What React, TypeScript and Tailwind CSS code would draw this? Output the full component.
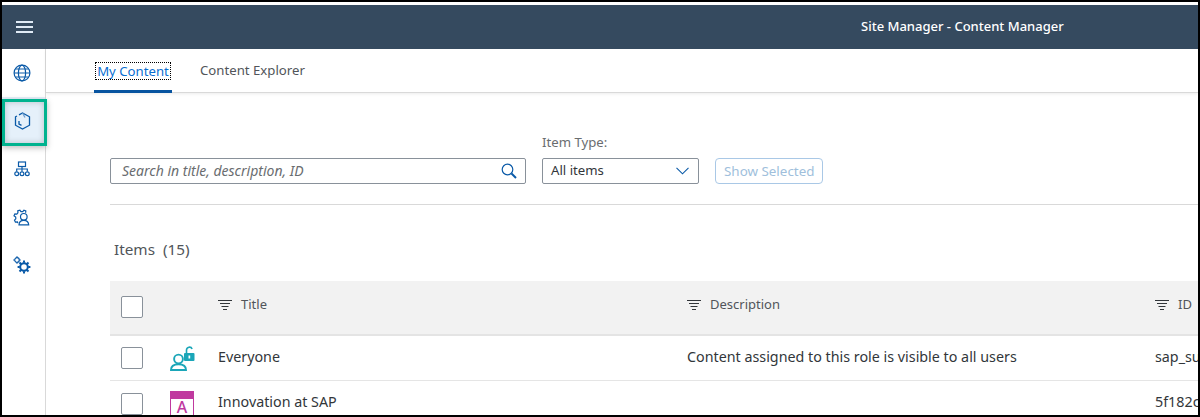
import React from "react";

const blue = "#0a5aa8";

function Globe() {
  return (
    <svg width="18" height="18" viewBox="0 0 18 18" fill="none" stroke={blue} strokeWidth="1.2">
      <circle cx="9" cy="9" r="7.9" />
      <ellipse cx="9" cy="9" rx="3.6" ry="7.9" />
      <path d="M1.100 9h15.800M2.400 5h13.200M2.400 13h13.200" />
    </svg>
  );
}
function Cube() {
  return (
    <svg width="17" height="18" viewBox="0 0 17 18" fill="none" stroke={blue} strokeWidth="1.3">
      <path d="M5 2.800 8.500 1l7 3.800v8.400l-7 3.800-7-3.800V4.800L3 4" />
      <path d="M5 9v3l2.500 1.400" />
      <path d="M8.500 1 11 5.500" stroke="#6f9ed0" />
    </svg>
  );
}
function Hierarchy() {
  return (
    <svg width="16" height="16" viewBox="0 0 16 16" fill="none" stroke={blue} strokeWidth="1.2">
      <rect x="4.500" y="1" width="7" height="4.500" />
      <path d="M8 5.500V8M2.700 10.500V8h10.600v2.500M8 8v2.500" />
      <circle cx="2.700" cy="12.800" r="1.900" />
      <circle cx="8" cy="12.800" r="1.900" />
      <circle cx="13.300" cy="12.800" r="1.900" />
    </svg>
  );
}
function GearUser() {
  return (
    <svg width="18" height="18" viewBox="0 0 18 18" fill="none" stroke={blue} strokeWidth="1.2">
      <path d="M4.800 15.200 4.400 13.800l-2 .2-.9-1.900 1.300-1.300-.1-1.800L1 7.800l.9-2 1.900.3 1.100-1.300-.1-2 2.100-.6 1 1.400 1.900 0L10.900 2.200l1.900.8-.2 1.700" />
      <circle cx="10.800" cy="8.800" r="3.300" />
      <path d="M6 16.800c.1-2.900 2.100-4.500 4.800-4.500s4.700 1.600 4.900 4.500z" />
    </svg>
  );
}
function Gears() {
  return (
    <svg width="18" height="18" viewBox="0 0 18 18" fill="none" stroke={blue}>
      <circle cx="4" cy="4" r="2.300" strokeWidth="1.200" />
      <path d="M4 .2v1.300M4 6.500v1.300M.2 4h1.300M6.500 4h1.300" strokeWidth="1.200" />
      <circle cx="11" cy="11" r="3.800" strokeWidth="2" />
      <path d="M11 4.600v2.200M11 15.200v2.200M4.600 11h2.200M15.200 11h2.200M6.500 6.500l1.500 1.500M14 14l1.500 1.500M6.500 15.500 8 14M14 8l1.500-1.500" strokeWidth="2" />
    </svg>
  );
}
function SearchIcon() {
  return (
    <svg width="16" height="16" viewBox="0 0 16 16" fill="none" stroke={blue}>
      <circle cx="6.500" cy="6.500" r="5.300" strokeWidth="1.200" />
      <path d="m10.500 10.500 4.500 4.500" strokeWidth="2" />
    </svg>
  );
}
function Chevron() {
  return (
    <svg width="13" height="8" viewBox="0 0 13 8" fill="none" stroke={blue} strokeWidth="1.100">
      <path d="m.5.800 6 6 6-6" />
    </svg>
  );
}
function SortLines() {
  return (
    <svg width="14" height="10" viewBox="0 0 14 10" fill="none" stroke="#32363a" strokeWidth="1">
      <path d="M0 .5h14M2 3.500h10M3.500 6.500h7M5 9.500h4" />
    </svg>
  );
}
function RoleIcon() {
  return (
    <svg width="25" height="25" viewBox="0 0 25 25" fill="none">
      <circle cx="8.500" cy="13" r="4.400" stroke="#1ba6b8" strokeWidth="1.900" />
      <path d="M1 24c0-4.200 3.200-5.800 7.500-5.800S16 19.800 16 24z" stroke="#1ba6b8" strokeWidth="1.900" />
      <rect x="14" y="7" width="10.500" height="8" rx="1" fill="#1ba6b8" />
      <path d="M16.500 7V4a2.900 2.900 0 0 1 5.600-1" stroke="#1ba6b8" strokeWidth="1.600" />
      <rect x="18.500" y="9.500" width="1.700" height="3" fill="#fff" />
    </svg>
  );
}
function AppIcon() {
  return (
    <div className="flex h-[25px] w-[24px] shrink-0 flex-col border border-[#c0399f]">
      <div className="h-[7px] shrink-0 bg-[#c0399f]" />
      <div className="flex flex-1 items-center justify-center text-[16px] leading-none font-medium text-[#c0399f]">A</div>
    </div>
  );
}
function Check() {
  return <div className="h-[22px] w-[22px] shrink-0 rounded-[2px] border border-[#89919a] bg-white" />;
}

function SideItem({ children, active }: { children: React.ReactNode; active?: boolean }) {
  return (
    <div className={`flex h-[48px] w-full items-center justify-center pr-[3px] ${active ? "bg-[#e5f0fa]" : ""}`}>{children}</div>
  );
}

function Row({ icon, title, desc, id, last }: { icon: React.ReactNode; title: string; desc: string; id: string; last?: boolean }) {
  return (
    <div className={`flex h-[45px] shrink-0 items-center text-[14.3px] text-[#32363a] ${last ? "" : "border-b border-[#e5e5e5]"}`}>
      <div className="flex w-[60px] shrink-0 pl-[11px]"><Check /></div>
      <div className="flex w-[48px] shrink-0 items-center">{icon}</div>
      <div className="w-[469px] shrink-0 pb-[3px]">{title}</div>
      <div className="w-[468px] shrink-0 pb-[3px] whitespace-nowrap">{desc}</div>
      <div className="shrink-0 pb-[3px] whitespace-nowrap">{id}</div>
    </div>
  );
}

function HeadCell({ label, w }: { label: string; w?: string }) {
  return (
    <div className={`flex shrink-0 items-center gap-[9px] pb-[6px] text-[13px] text-[#51555a] ${w ?? ""}`}>
      <SortLines />
      {label}
    </div>
  );
}

export default function App() {
  return (
    <div className="relative flex h-[417px] w-[1200px] flex-col overflow-hidden border-2 border-black bg-white text-[14px] [font-family:'Noto_Sans',sans-serif]">
      <div className="h-[3px] shrink-0 bg-white" />
      <header className="relative flex h-[44px] shrink-0 items-center bg-[#354a5f] text-white">
        <div className="flex w-[44px] shrink-0 items-center justify-center">
          <div className="flex h-[12px] w-[17px] flex-col justify-between">
            <div className="h-[2px] bg-[#dfeaf5]" />
            <div className="h-[2px] bg-[#dfeaf5]" />
            <div className="h-[2px] bg-[#dfeaf5]" />
          </div>
        </div>
        <div className="flex-1 pl-[815px] text-[13px] font-medium whitespace-nowrap">Site Manager - Content Manager</div>
      </header>
      <div className="flex min-h-0 flex-1">
        <aside className="flex w-[44px] shrink-0 flex-col border-r border-[#d9d9d9] bg-white">
          <SideItem><Globe /></SideItem>
          <SideItem active><Cube /></SideItem>
          <SideItem><Hierarchy /></SideItem>
          <SideItem><GearUser /></SideItem>
          <SideItem><Gears /></SideItem>
        </aside>
        <main className="flex min-w-0 flex-1 flex-col">
          <div className="flex h-[44px] shrink-0 border-b border-[#d9d9d9] pl-[48px] text-[13.2px] shadow-[0_1px_3px_rgba(0,0,0,0.08)]">
            <div className="relative flex w-[78px] items-center justify-center text-[#0a6ed1]">
              <span className="border border-dotted border-black px-[1px] leading-[16px] whitespace-nowrap">My Content</span>
              <div className="absolute right-0 -bottom-px left-0 h-[3px] bg-[#0854a0]" />
            </div>
            <div className="flex items-center pl-[28px] whitespace-nowrap text-[#51555a]">Content Explorer</div>
          </div>
          <div className="flex min-h-0 flex-1 flex-col pl-[64px]">
            <div className="flex h-[112px] shrink-0 items-end gap-[16px] border-b border-[#d9d9d9] pb-[20px]">
              <div className="flex h-[26px] w-[416px] shrink-0 items-center justify-between rounded-[2px] border border-[#89919a] pr-[8px] pl-[11px]">
                <span className="pb-[1px] text-[#6a6d70] italic">Search in title, description, ID</span>
                <SearchIcon />
              </div>
              <div className="flex shrink-0 flex-col">
                <div className="mb-[5px] text-[13.2px] text-[#6a6d70]">Item Type:</div>
                <div className="flex h-[26px] w-[157px] items-center justify-between rounded-[2px] border border-[#89919a] pr-[9px] pl-[8px] text-[13.2px] text-[#32363a]">
                  <span>All items</span>
                  <Chevron />
                </div>
              </div>
              <div className="flex h-[26px] items-center rounded-[4px] border border-[#a9c8e6] px-[8px] text-[13.4px] text-[#a0bfdc]">Show Selected</div>
            </div>
            <div className="flex h-[76px] shrink-0 items-end pb-[20px] pl-[4px] text-[15.3px] text-[#51555a]">Items&nbsp;&nbsp;(15)</div>
            <div className="flex h-[55px] shrink-0 items-center border-b-2 border-[#e4e4e4] bg-[#f2f2f2]">
              <div className="flex w-[108px] shrink-0 pb-[2px] pl-[11px]"><Check /></div>
              <HeadCell label="Title" w="w-[469px]" />
              <HeadCell label="Description" w="w-[468px]" />
              <HeadCell label="ID" />
            </div>
            <Row icon={<RoleIcon />} title="Everyone" desc="Content assigned to this role is visible to all users" id="sap_su" />
            <Row icon={<AppIcon />} title="Innovation at SAP" desc="" id="5f182c" last />
          </div>
        </main>
      </div>
      <div className="pointer-events-none absolute top-[97px] left-0 h-[47px] w-[45px] border-[3px] border-[#00b38f] shadow-[0_2px_6px_rgba(0,0,0,0.25),inset_0_0_6px_rgba(0,0,0,0.2)]" />
    </div>
  );
}
